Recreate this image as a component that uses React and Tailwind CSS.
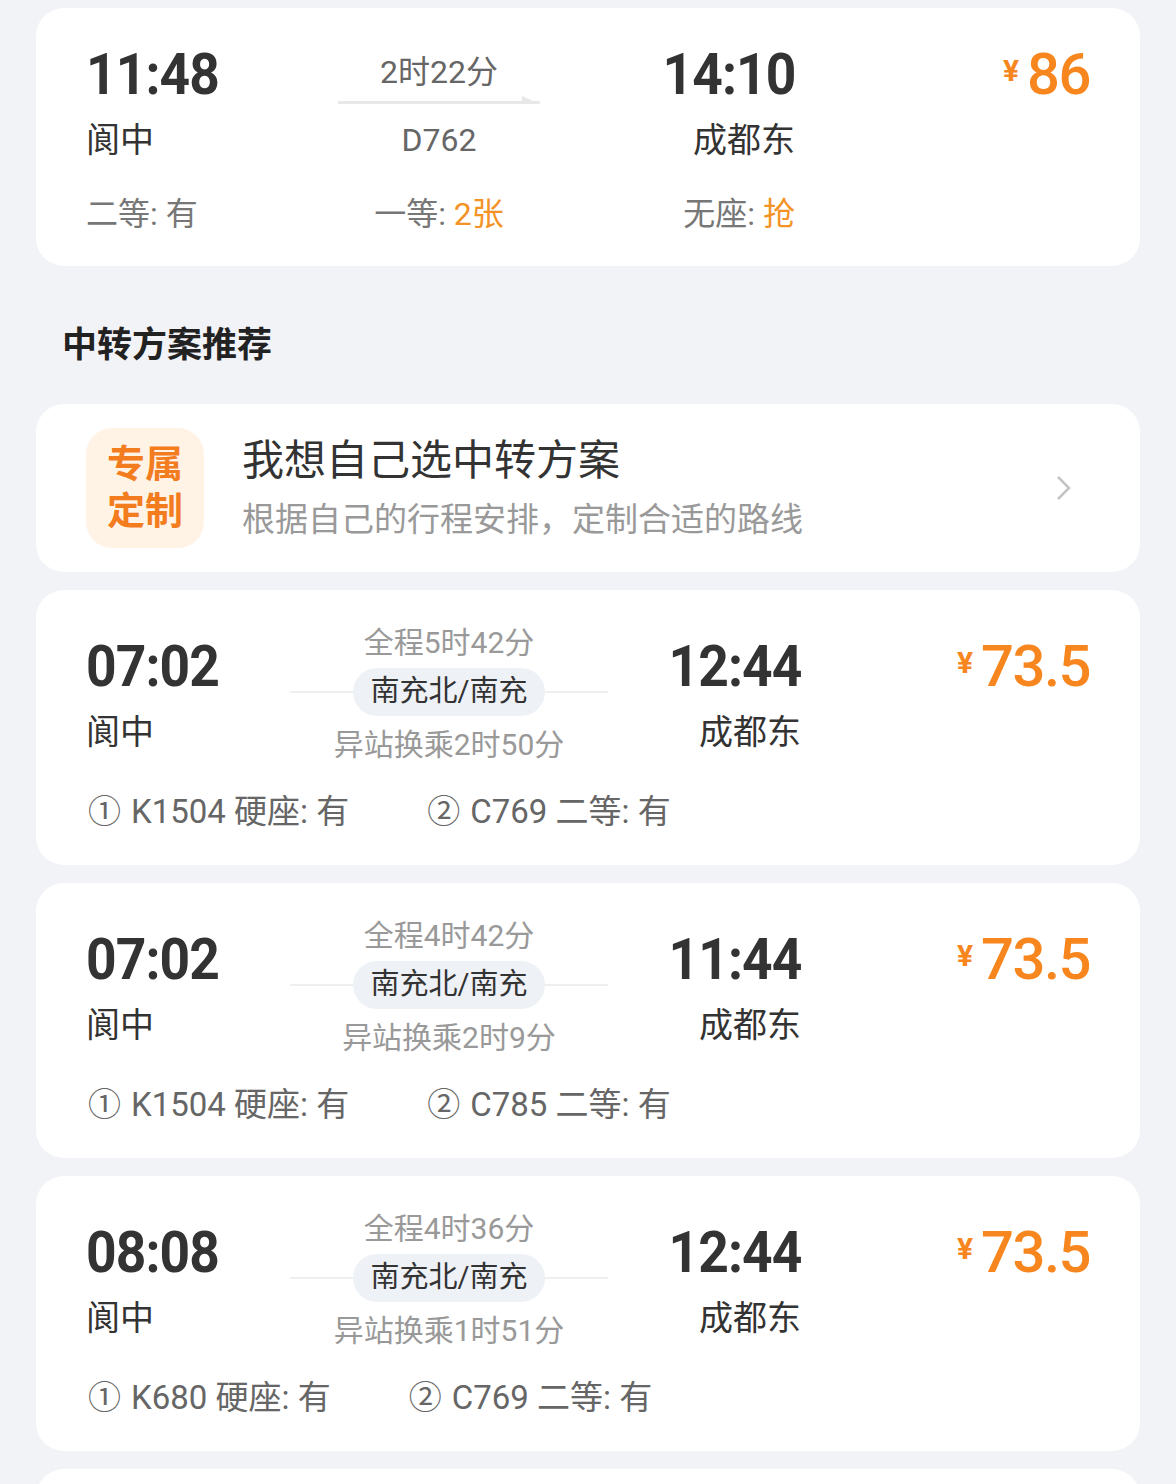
import React from "react";

const FONT = { fontFamily: '"Roboto", "Noto Sans CJK SC", sans-serif' };

const transfers = [
  {
    dep: "07:02",
    arr: "12:44",
    total: "全程5时42分",
    wait: "异站换乘2时50分",
    first: "K1504 硬座: 有",
    second: "C769 二等: 有",
  },
  {
    dep: "07:02",
    arr: "11:44",
    total: "全程4时42分",
    wait: "异站换乘2时9分",
    first: "K1504 硬座: 有",
    second: "C785 二等: 有",
  },
  {
    dep: "08:08",
    arr: "12:44",
    total: "全程4时36分",
    wait: "异站换乘1时51分",
    first: "K680 硬座: 有",
    second: "C769 二等: 有",
  },
];

const Price = ({ value }) => (
  <div className="flex items-center justify-end text-[#f7861e]">
    <span className="text-[30px] font-bold leading-none mr-[8px] -mt-[6px]">¥</span>
    <span className="text-[58px] font-medium leading-none tracking-[-1.5px]">{value}</span>
  </div>
);

const Time = ({ children, right }) => (
  <span
    className={
      right
        ? "inline-block origin-right scale-x-[0.92] text-[58px] font-bold leading-none text-[#333333] tracking-[-1px]"
        : "inline-block origin-left scale-x-[0.92] text-[58px] font-bold leading-none text-[#333333] tracking-[-1px]"
    }
  >
    {children}
  </span>
);

const Arrow = () => (
  <svg width="202" height="8" viewBox="0 0 202 8" className="block">
    <rect x="0" y="5" width="202" height="3" fill="#e8e8e8" />
    <polygon points="184,0 202,8 184,8" fill="#e8e8e8" />
  </svg>
);

const DirectCard = () => (
  <div className="bg-white rounded-[28px] px-[50px] pt-[36px] pb-[32px]">
    <div className="grid grid-cols-[252px_202px_255px_1fr] h-[60px]">
      <div className="flex items-center"><Time>11:48</Time></div>
      <div className="flex flex-col justify-end items-center">
        <div className="text-[32px] leading-[32px] text-[#666666]">2时22分</div>
        <div className="mt-[8px]"><Arrow /></div>
      </div>
      <div className="flex items-center justify-end"><Time right>14:10</Time></div>
      <Price value="86" />
    </div>
    <div className="grid grid-cols-[252px_202px_255px_1fr] h-[40px] mt-[16px] items-center">
      <div className="text-[34px] leading-[40px] text-[#333333]">阆中</div>
      <div className="text-[32px] leading-[40px] text-[#666666] text-center">D762</div>
      <div className="text-[34px] leading-[40px] text-[#333333] text-right">成都东</div>
      <div />
    </div>
    <div className="grid grid-cols-[252px_202px_255px_1fr] h-[40px] mt-[34px] items-center text-[32px] leading-[40px] text-[#777777]">
      <div>二等: 有</div>
      <div className="text-center">一等: <span className="text-[#f39327]">2张</span></div>
      <div className="text-right">无座: <span className="text-[#f39327]">抢</span></div>
      <div />
    </div>
  </div>
);

const CustomCard = () => (
  <div className="bg-white rounded-[28px] h-[168px] pl-[50px] pr-[68px] flex items-center">
    <div className="w-[118px] h-[120px] rounded-[26px] bg-[#fff3e6] flex flex-col items-center justify-center text-[38px] leading-[47px] font-bold text-[#f37c1e]">
      <span>专属</span>
      <span>定制</span>
    </div>
    <div className="ml-[38px] flex-1">
      <div className="text-[42px] leading-[50px] text-[#333333]">我想自己选中转方案</div>
      <div className="text-[33px] leading-[40px] text-[#999999] mt-[14px]">根据自己的行程安排，定制合适的路线</div>
    </div>
    <svg width="16" height="26" viewBox="0 0 16 26" fill="none" className="block">
      <path d="M2 2 L13 13 L2 24" stroke="#c4c4c4" strokeWidth="2.5" />
    </svg>
  </div>
);

const TransferCard = ({ t }) => (
  <div className="bg-white rounded-[28px] px-[50px] pt-[38px] pb-[33px]">
    <div className="grid grid-cols-[204px_318px_193px_1fr] items-start">
      <div className="pt-[8px]">
        <div className="h-[60px] flex items-center"><Time>{t.dep}</Time></div>
        <div className="mt-[16px] text-[34px] leading-[40px] text-[#333333]">阆中</div>
      </div>
      <div className="flex flex-col">
        <div className="h-[30px] text-[30px] leading-[30px] text-[#999999] text-center">{t.total}</div>
        <div className="mt-[10px] h-[48px] flex items-center">
          <div className="flex-1 h-[2px] bg-[#efefef]" />
          <div className="h-[48px] px-[18px] rounded-full bg-[#eef1f6] flex items-center text-[29px] text-[#333333]">南充北/南充</div>
          <div className="flex-1 h-[2px] bg-[#efefef]" />
        </div>
        <div className="mt-[14px] h-[30px] text-[30px] leading-[30px] text-[#999999] text-center">{t.wait}</div>
      </div>
      <div className="pt-[8px] text-right">
        <div className="h-[60px] flex items-center justify-end"><Time right>{t.arr}</Time></div>
        <div className="mt-[16px] text-[34px] leading-[40px] text-[#333333]">成都东</div>
      </div>
      <div className="pt-[8px] h-[68px] flex items-center justify-end">
        <Price value="73.5" />
      </div>
    </div>
    <div className="mt-[32px] h-[40px] flex items-center gap-[78px] text-[33px] leading-[40px] text-[#666666] pl-[2px]">
      <span><span className="mr-[10px]">①</span>{t.first}</span>
      <span><span className="mr-[10px]">②</span>{t.second}</span>
    </div>
  </div>
);

export default function App() {
  return (
    <div className="w-[1176px] h-[1484px] overflow-hidden bg-[#f2f3f7] px-[36px] pt-[8px]" style={FONT}>
      <DirectCard />
      <div className="mt-[60px] mb-[38px] pl-[26px] h-[40px] text-[35px] leading-[40px] font-bold text-[#222222]">中转方案推荐</div>
      <CustomCard />
      <div className="flex flex-col gap-[18px] mt-[18px]">
        {transfers.map((t, i) => (
          <TransferCard key={i} t={t} />
        ))}
        <div className="bg-white rounded-[28px] h-[275px]" />
      </div>
    </div>
  );
}
